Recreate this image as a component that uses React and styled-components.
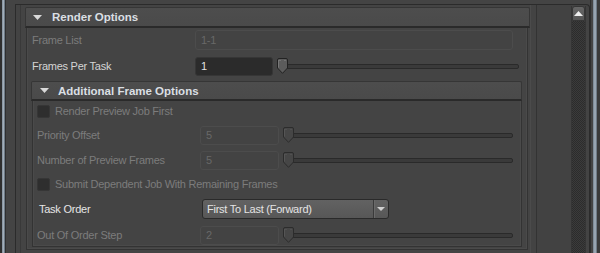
import React from "react";
import styled, { createGlobalStyle } from "styled-components";

const Global = createGlobalStyle`
  html, body { margin: 0; padding: 0; background: #444444; }
  body { font-family: "Liberation Sans", Arial, sans-serif; font-size: 11px; letter-spacing: -0.25px; }
  * { box-sizing: border-box; }
`;

const Screen = styled.div`
  display: flex;
  width: 600px;
  height: 253px;
  background: #444444;
  overflow: hidden;
`;

const WindowEdge = styled.div`
  flex: none;
  height: 100%;
  width: ${(p) => (p.$right ? 11 : 6)}px;
  margin-right: ${(p) => (p.$right ? 0 : 9)}px;
  background: ${(p) =>
    p.$right
      ? "linear-gradient(to right, #2e2e2e 0 1px, #444 1px 3px, #7f8d99 3px 4px, #97a4b0 4px 6px, #6f7b86 6px 7px, #3a3a3a 7px 11px)"
      : "linear-gradient(to right, #2f2f2f 0 2px, #8c99a5 2px 3px, #a2aeb9 3px 4px, #6d7a86 4px 5px, #2f2f2f 5px 6px)"};
`;

const OuterFrame = styled.div`
  flex: none;
  width: 575px;
  margin-top: 4px;
  display: flex;
  border: 1px solid #2b2b2b;
  border-bottom: none;
  border-top-right-radius: 4px;
  background: #434343;
`;

const Viewport = styled.div`
  flex: none;
  width: 517px;
  margin-left: 4px;
  padding: 2px 6px 0 4px;
  border-left: 1px solid #393939;
  border-right: 1px solid #333333;
  box-shadow: inset -5px 0 0 #434343, inset -6px 0 0 #4b4b4b;
  background: #444444;
`;

const Gutter = styled.div`
  flex: none;
  width: 34px;
  background: #424242;
`;

const ScrollBar = styled.div`
  flex: none;
  width: 15px;
  margin-top: 1px;
  display: flex;
  flex-direction: column;
  border-left: 1px solid #353535;
  border-right: 1px solid #353535;
`;

const ScrollButton = styled.div`
  flex: none;
  height: 15px;
  display: flex;
  align-items: center;
  justify-content: center;
  background: linear-gradient(#666666, #565656);
  border: 1px solid #363636;
  border-radius: 3px 3px 0 0;
`;

const ScrollTrack = styled.div`
  flex: 1;
  background: repeating-conic-gradient(#2c2c2c 0 25%, #3b3b3b 0 50%) 0 0 / 2px 2px;
`;

const Group = styled.div`
  display: flex;
  flex-direction: column;
  margin: ${(p) => (p.$nested ? "0 -4px 2px -1px" : "0")};
`;

const GroupHeader = styled.div`
  flex: none;
  height: ${(p) => (p.$nested ? 20 : 21)}px;
  display: flex;
  align-items: center;
  gap: ${(p) => (p.$nested ? 9 : 10)}px;
  padding-left: ${(p) => (p.$nested ? 8 : 7)}px;
  background: linear-gradient(#4d4d4d, #4a4a4a);
  border: 1px solid #363636;
  border-bottom: 2px solid #2a2a2a;
  border-radius: 2px 2px 0 0;
  color: #dadfe3;
  font-weight: bold;
  font-size: 11.5px;
  letter-spacing: 0;
  margin: 0 ${(p) => (p.$nested ? 1 : 0)}px 0 0;
`;

const GroupBody = styled.div`
  display: flex;
  flex-direction: column;
  gap: 5px;
  margin: 0 ${(p) => (p.$nested ? 1 : 2)}px 0 1px;
  padding: ${(p) => (p.$nested ? "1px 8px 1px 4px" : "1px 8px 0 5px")};
  border: 1px solid #333333;
  border-top: none;
  box-shadow: inset 1px 0 0 #4a4a4a, inset -1px 0 0 #4a4a4a, inset 0 -1px 0 #4a4a4a;
`;

const Row = styled.div`
  display: flex;
  align-items: center;
  height: ${(p) => p.$h || 20}px;
  margin-top: ${(p) => p.$mt || 0}px;
  padding-left: ${(p) => p.$indent || 0}px;
`;

const Label = styled.div`
  flex: none;
  width: 163px;
  color: ${(p) => (p.$disabled ? "#7c7c7c" : p.$bright ? "#e6e6e6" : "#d4d4d4")};
  white-space: nowrap;
`;

const Field = styled.div`
  flex: none;
  width: ${(p) => p.$w || 79}px;
  height: ${(p) => p.$fh || 19}px;
  display: flex;
  align-items: center;
  padding-left: 5px;
  border-radius: 3px;
  border: 1px solid ${(p) => (p.$disabled ? "#4c4c4c" : "#363636")};
  background: ${(p) => (p.$disabled ? "#434343" : "#2b2b2b")};
  color: ${(p) => (p.$disabled ? "#686868" : "#e2e2e2")};
`;

const Slider = styled.div`
  flex: 1;
  display: flex;
  align-items: center;
  margin-left: 4px;
`;

const HandleWrap = styled.div`
  flex: none;
  width: 11px;
  height: 16px;
  margin-right: -4px;
  position: relative;
  z-index: 1;
  display: flex;
`;

const Track = styled.div`
  flex: 1;
  height: 5px;
  border: 1px solid #2a2a2a;
  border-radius: 2px;
  background: #3a3a3a;
`;

const CheckRow = styled.div`
  display: flex;
  align-items: center;
  gap: 5px;
  height: 18px;
  color: #7c7c7c;
  white-space: nowrap;
`;

const CheckBox = styled.div`
  flex: none;
  width: 13px;
  height: 13px;
  border-radius: 2px;
  background: #2e2e2e;
  border: 1px solid #363636;
`;

const Combo = styled.div`
  flex: none;
  width: 187px;
  height: 20px;
  display: flex;
  align-items: stretch;
  border: 1px solid #2a2a2a;
  border-radius: 3px;
  background: linear-gradient(#626262, #575757);
  color: #e4e4e4;
`;

const ComboText = styled.div`
  flex: 1;
  display: flex;
  align-items: center;
  padding-left: 4px;
  white-space: nowrap;
`;

const ComboArrow = styled.div`
  flex: none;
  width: 15px;
  display: flex;
  align-items: center;
  justify-content: center;
  border-left: 1px solid #3a3a3a;
  box-shadow: inset 1px 0 0 #6a6a6a;
`;

const Tri = ({ w = 9, h = 5, color = "#d9d9d9", up }) => (
  <svg width={w} height={h} viewBox={`0 0 ${w} ${h}`} style={{ flex: "none" }}>
    {up ? (
      <polygon points={`0,${h} ${w},${h} ${w / 2},0`} fill={color} />
    ) : (
      <polygon points={`0,0 ${w},0 ${w / 2},${h}`} fill={color} />
    )}
  </svg>
);

const Handle = ({ disabled }) => (
  <HandleWrap>
    <svg width="11" height="16" viewBox="0 0 11 16">
      <path
        d="M2 0.5 H9 Q10.5 0.5 10.5 2 V10 L5.5 15.3 L0.5 10 V2 Q0.5 0.5 2 0.5 Z"
        fill={disabled ? "#464646" : "#5c5c5c"}
        stroke={disabled ? "#2c2c2c" : "#222"}
      />
      <path d="M1.5 2 V9.6" stroke={disabled ? "#555" : "#777"} />
      <rect x="2.5" y="2" width="1" height="1" fill={disabled ? "#5a5a5a" : "#8a8a8a"} />
      <rect x="7.5" y="2" width="1" height="1" fill={disabled ? "#5a5a5a" : "#8a8a8a"} />
    </svg>
  </HandleWrap>
);

const SliderField = ({ label, value, disabled, w }) => (
  <Row>
    <Label $disabled={disabled}>{label}</Label>
    <Field $disabled={disabled} $w={w}>{value}</Field>
    <Slider>
      <Handle disabled={disabled} />
      <Track />
    </Slider>
  </Row>
);

export default function App() {
  return (
    <Screen>
      <Global />
      <WindowEdge />
      <OuterFrame>
        <Viewport>
          <Group>
            <GroupHeader>
              <Tri />
              <span>Render Options</span>
            </GroupHeader>
            <GroupBody>
              <Row $mt={1}>
                <Label $disabled>Frame List</Label>
                <Field $disabled $w={318} $fh={20}>1-1</Field>
              </Row>
              <Row $mt={1}>
                <Label>Frames Per Task</Label>
                <Field $w={78}>1</Field>
                <Slider>
                  <Handle />
                  <Track />
                </Slider>
              </Row>
              <Group $nested>
                <GroupHeader $nested>
                  <Tri />
                  <span>Additional Frame Options</span>
                </GroupHeader>
                <GroupBody $nested>
                  <CheckRow>
                    <CheckBox />
                    <span>Render Preview Job First</span>
                  </CheckRow>
                  <SliderField label="Priority Offset" value="5" disabled />
                  <SliderField label="Number of Preview Frames" value="5" disabled />
                  <CheckRow>
                    <CheckBox />
                    <span>Submit Dependent Job With Remaining Frames</span>
                  </CheckRow>
                  <Row $h={22} $indent={2}>
                    <Label $bright>Task Order</Label>
                    <Combo>
                      <ComboText>First To Last (Forward)</ComboText>
                      <ComboArrow>
                        <Tri w={8} h={4} color="#d0d0d0" />
                      </ComboArrow>
                    </Combo>
                  </Row>
                  <SliderField label="Out Of Order Step" value="2" disabled />
                </GroupBody>
              </Group>
            </GroupBody>
          </Group>
        </Viewport>
        <Gutter />
        <ScrollBar>
          <ScrollButton>
            <Tri w={9} h={5} color="#eeeeee" up />
          </ScrollButton>
          <ScrollTrack />
        </ScrollBar>
      </OuterFrame>
      <WindowEdge $right />
    </Screen>
  );
}
